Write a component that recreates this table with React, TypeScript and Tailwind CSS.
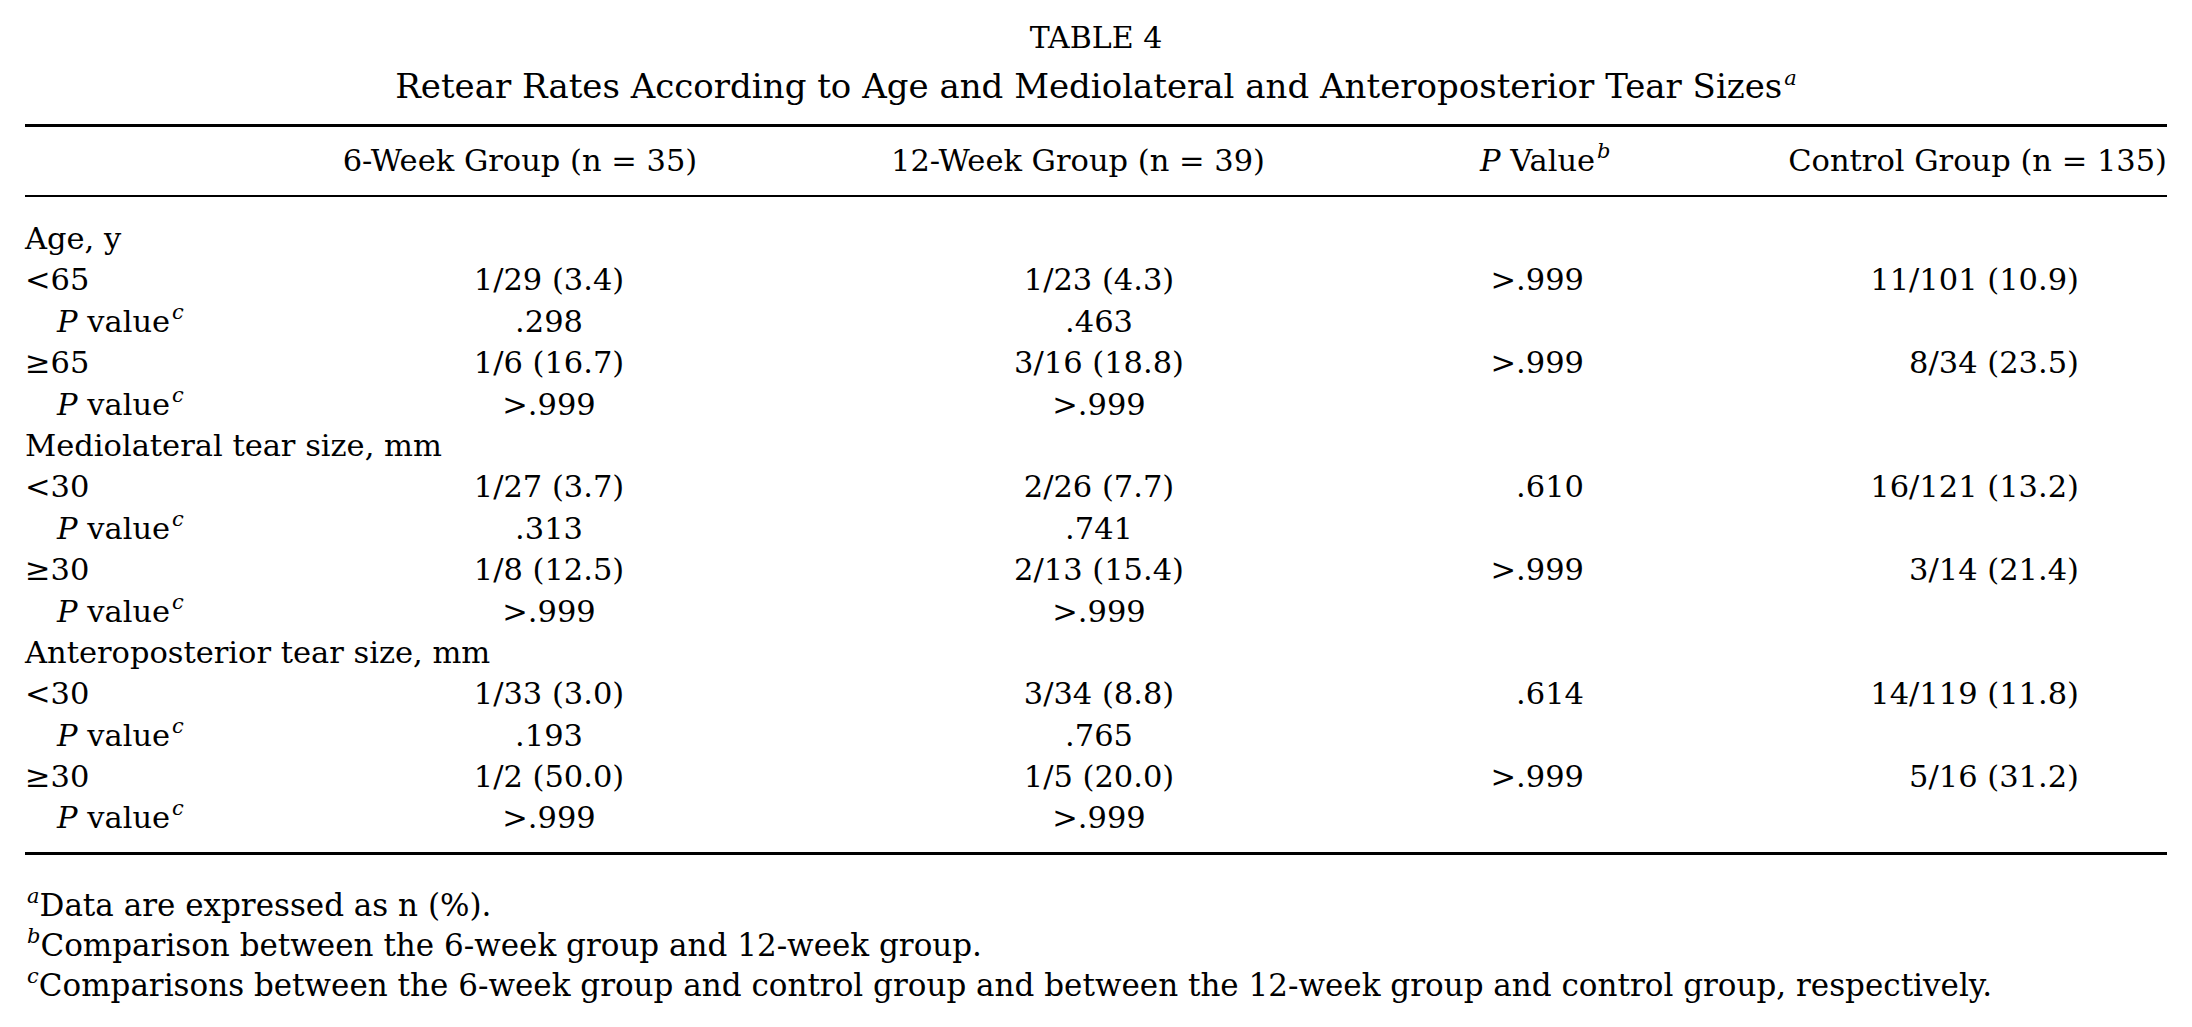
const rows: { label: string; sub?: boolean; six?: string; twelve?: string; p?: string; control?: string; heading?: boolean }[] = [
  { label: "Age, y", heading: true },
  { label: "<65", six: "1/29 (3.4)", twelve: "1/23 (4.3)", p: ">.999", control: "11/101 (10.9)" },
  { label: "P value", sub: true, six: ".298", twelve: ".463" },
  { label: "≥65", six: "1/6 (16.7)", twelve: "3/16 (18.8)", p: ">.999", control: "8/34 (23.5)" },
  { label: "P value", sub: true, six: ">.999", twelve: ">.999" },
  { label: "Mediolateral tear size, mm", heading: true },
  { label: "<30", six: "1/27 (3.7)", twelve: "2/26 (7.7)", p: ".610", control: "16/121 (13.2)" },
  { label: "P value", sub: true, six: ".313", twelve: ".741" },
  { label: "≥30", six: "1/8 (12.5)", twelve: "2/13 (15.4)", p: ">.999", control: "3/14 (21.4)" },
  { label: "P value", sub: true, six: ">.999", twelve: ">.999" },
  { label: "Anteroposterior tear size, mm", heading: true },
  { label: "<30", six: "1/33 (3.0)", twelve: "3/34 (8.8)", p: ".614", control: "14/119 (11.8)" },
  { label: "P value", sub: true, six: ".193", twelve: ".765" },
  { label: "≥30", six: "1/2 (50.0)", twelve: "1/5 (20.0)", p: ">.999", control: "5/16 (31.2)" },
  { label: "P value", sub: true, six: ">.999", twelve: ">.999" },
]

const grid = "grid grid-cols-[355px_338px_762px_114px_573px] items-center"

function Sup({ children }: { children: string }) {
  return <sup className="relative -top-[13px] ml-[2px] text-[21px] italic leading-none">{children}</sup>
}

export default function App() {
  return (
    <div className="h-[1027px] w-[2192px] bg-white text-black font-['DejaVu_Serif',serif] text-[30.5px]">
      <div className="pt-[13px] text-center leading-[49px]">
        <div className="text-[30px]">TABLE 4</div>
        <div className="text-[34px]">
          Retear Rates According to Age and Mediolateral and Anteroposterior Tear Sizes
          <Sup>a</Sup>
        </div>
      </div>

      <div className="mx-[25px] mt-[13px]">
        <div className="border-t-[3px] border-black" />
        <div className={`${grid} h-[68px]`}>
          <div />
          <div className="flex justify-center pr-[58px]">
            <span className="whitespace-nowrap">6-Week Group (n = 35)</span>
          </div>
          <div className="flex justify-center pr-[42px]">
            <span className="whitespace-nowrap">12-Week Group (n = 39)</span>
          </div>
          <div className="whitespace-nowrap text-right">
            <span className="italic">P</span> Value<Sup>b</Sup>
          </div>
          <div className="whitespace-nowrap text-right">Control Group (n = 135)</div>
        </div>
        <div className="border-t-[2px] border-black" />

        <div className="pt-[19px] pb-[15px]">
          {rows.map((row, i) => (
            <div key={i} className={`${grid} h-[41.4px]`}>
              <div className={row.sub ? "whitespace-nowrap pl-[32px]" : "whitespace-nowrap"}>
                {row.sub ? (
                  <>
                    <span className="italic">P</span> value<Sup>c</Sup>
                  </>
                ) : (
                  row.label
                )}
              </div>
              <div className="whitespace-nowrap text-center">{row.six}</div>
              <div className="whitespace-nowrap text-center">{row.twelve}</div>
              <div className="whitespace-nowrap pr-[10px] text-right">{row.p}</div>
              <div className="whitespace-nowrap pr-[88px] text-right">{row.control}</div>
            </div>
          ))}
        </div>
        <div className="border-t-[3px] border-black" />

        <div className="pt-[30px] text-[31px] leading-[40px]">
          <div>
            <Sup>a</Sup>Data are expressed as n (%).
          </div>
          <div>
            <Sup>b</Sup>Comparison between the 6-week group and 12-week group.
          </div>
          <div className="whitespace-nowrap">
            <Sup>c</Sup>Comparisons between the 6-week group and control group and between the 12-week group and control group, respectively.
          </div>
        </div>
      </div>
    </div>
  )
}
